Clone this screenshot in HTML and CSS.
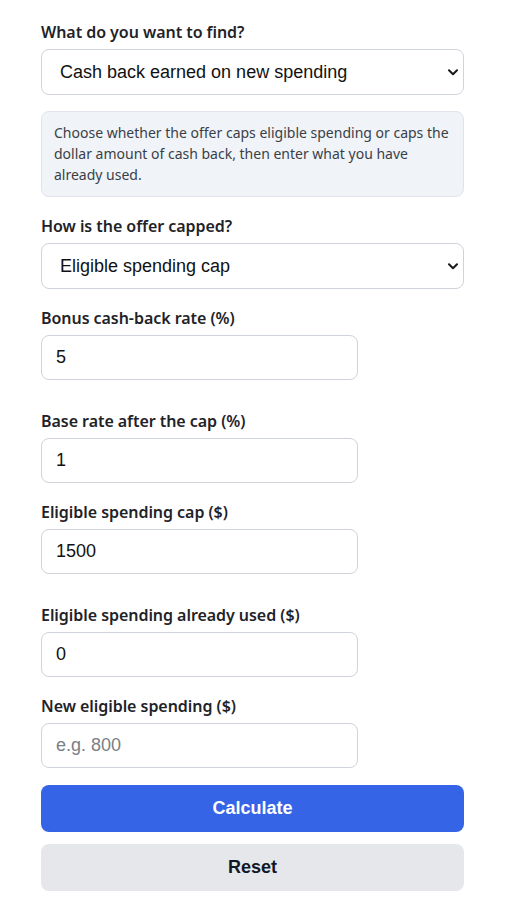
FILE: index.html
```html
<!DOCTYPE html>
<html lang="en">
<head>
<meta charset="utf-8">
<title>Cash back cap calculator</title>
<link rel="stylesheet" href="styles.css">
</head>
<body>
<main class="calc">
  <div class="field field--first">
    <label class="field__label" for="goal">What do you want to find?</label>
    <div class="select-wrap">
      <select id="goal" class="control control--select">
        <option>Cash back earned on new spending</option>
      </select>
      <svg class="select-wrap__arrow" width="10" height="7" viewBox="0 0 10 7" aria-hidden="true"><polyline points="1,1.2 5,5.2 9,1.2" fill="none" stroke="#1a1a1a" stroke-width="2" stroke-linecap="round" stroke-linejoin="round"/></svg>
    </div>
  </div>

  <p class="note">Choose whether the offer caps eligible spending or caps the dollar amount of cash back, then enter what you have already used.</p>

  <div class="field">
    <label class="field__label" for="cap-type">How is the offer capped?</label>
    <div class="select-wrap">
      <select id="cap-type" class="control control--select">
        <option>Eligible spending cap</option>
      </select>
      <svg class="select-wrap__arrow" width="10" height="7" viewBox="0 0 10 7" aria-hidden="true"><polyline points="1,1.2 5,5.2 9,1.2" fill="none" stroke="#1a1a1a" stroke-width="2" stroke-linecap="round" stroke-linejoin="round"/></svg>
    </div>
  </div>

  <div class="field field--pair-start">
    <label class="field__label" for="bonus">Bonus cash-back rate (%)</label>
    <input id="bonus" class="control control--short" type="text" value="5">
  </div>

  <div class="field">
    <label class="field__label" for="base">Base rate after the cap (%)</label>
    <input id="base" class="control control--short" type="text" value="1">
  </div>

  <div class="field field--pair-start">
    <label class="field__label" for="cap">Eligible spending cap ($)</label>
    <input id="cap" class="control control--short" type="text" value="1500">
  </div>

  <div class="field">
    <label class="field__label" for="used">Eligible spending already used ($)</label>
    <input id="used" class="control control--short" type="text" value="0">
  </div>

  <div class="field field--end">
    <label class="field__label" for="new">New eligible spending ($)</label>
    <input id="new" class="control control--short" type="text" placeholder="e.g. 800">
  </div>

  <div class="actions">
    <button class="btn btn--primary" type="button">Calculate</button>
    <button class="btn btn--secondary" type="button">Reset</button>
  </div>
</main>
</body>
</html>
```
FILE: styles.css
```css
* {
  box-sizing: border-box;
}

html,
body {
  margin: 0;
  background: #ffffff;
}

body {
  font-family: "Noto Sans", "Open Sans", sans-serif;
  color: #1f2328;
}

.calc {
  width: 423px;
  margin-left: 41px;
  padding-top: 21px;
  display: flex;
  flex-direction: column;
}

.field {
  display: flex;
  flex-direction: column;
  margin-bottom: 18px;
}

.field--first {
  margin-bottom: 16px;
}

.field--pair-start {
  margin-bottom: 30px;
}

.field--end {
  margin-bottom: 17px;
}

.field__label {
  font-size: 16px;
  font-weight: 560;
  line-height: 22px;
  margin-bottom: 6px;
  letter-spacing: -0.05px;
}

.select-wrap {
  position: relative;
}

.select-wrap__arrow {
  position: absolute;
  right: 6px;
  top: 20px;
  pointer-events: none;
}

.control {
  font-family: "Liberation Sans", Arial, sans-serif;
  font-size: 18px;
  color: #111111;
  background: #ffffff;
  border: 1px solid #cfd3da;
  border-radius: 8px;
  outline: none;
}

.control--select {
  display: block;
  width: 100%;
  height: 46px;
  padding: 0 24px 0 18px;
  appearance: none;
  -webkit-appearance: none;
}

.control--short {
  width: 317px;
  height: 45px;
  padding: 0 14px;
}

.control::placeholder {
  color: #7b7f86;
}

.note {
  margin: 0 0 18px;
  padding: 10px 12px 11px;
  background: #f0f3f8;
  border: 1px solid #e0e4ea;
  border-radius: 8px;
  font-size: 14px;
  line-height: 21px;
  color: #3a3f47;
}

.actions {
  display: flex;
  flex-direction: column;
  gap: 12px;
}

.btn {
  height: 47px;
  border: none;
  border-radius: 8px;
  font-family: "Liberation Sans", Arial, sans-serif;
  font-size: 18px;
  font-weight: 700;
  cursor: pointer;
}

.btn--primary {
  background: #3565e6;
  color: #ffffff;
}

.btn--secondary {
  background: #e5e7eb;
  color: #111827;
}
```
